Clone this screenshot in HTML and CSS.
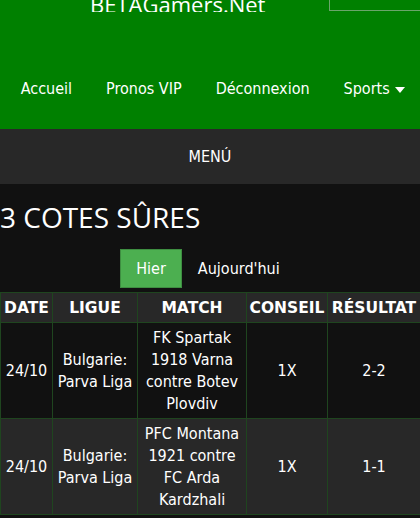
FILE: index.html
```html
<!DOCTYPE html>
<html lang="fr">
<head>
<meta charset="utf-8">
<title>BETAGamers.Net</title>
<link rel="stylesheet" href="styles.css">
</head>
<body>
<header class="site-header">
  <div class="brand-row">
    <div class="brand">BETAGamers.Net</div>
    <div class="search-box"></div>
  </div>
  <nav class="main-nav">
    <a class="nav-link" href="#">Accueil</a>
    <a class="nav-link" href="#">Pronos VIP</a>
    <a class="nav-link" href="#">Déconnexion</a>
    <a class="nav-link" href="#">Sports <span class="caret"></span></a>
  </nav>
</header>
<div class="menu-bar">MENÚ</div>
<main class="content">
  <h1 class="page-title">3 COTES SÛRES</h1>
  <div class="tabs">
    <button class="tab tab-active">Hier</button>
    <button class="tab">Aujourd'hui</button>
  </div>
  <table class="odds">
    <colgroup>
      <col class="c-date"><col class="c-league"><col class="c-match"><col class="c-tip"><col class="c-result">
    </colgroup>
    <thead>
      <tr><th>DATE</th><th>LIGUE</th><th>MATCH</th><th>CONSEIL</th><th>RÉSULTAT</th></tr>
    </thead>
    <tbody>
      <tr class="row-odd">
        <td>24/10</td>
        <td>Bulgarie: Parva Liga</td>
        <td>FK Spartak 1918 Varna contre Botev Plovdiv</td>
        <td>1X</td>
        <td>2-2</td>
      </tr>
      <tr class="row-even">
        <td>24/10</td>
        <td>Bulgarie: Parva Liga</td>
        <td>PFC Montana 1921 contre FC Arda Kardzhali</td>
        <td>1X</td>
        <td>1-1</td>
      </tr>
    </tbody>
  </table>
</main>
</body>
</html>
```
FILE: styles.css
```css
* { box-sizing: border-box; }
html, body { margin: 0; padding: 0; }
body {
  background: #111111;
  color: #ffffff;
  font-family: "DejaVu Sans Condensed", "DejaVu Sans", sans-serif;
  font-size: 16px;
  overflow: hidden;
}
.site-header {
  background: #008000;
  height: 129px;
  display: flex;
  flex-direction: column;
}
.brand-row {
  height: 12px;
  display: flex;
  align-items: flex-end;
  overflow: hidden;
}
.brand {
  font-family: "Open Sans", sans-serif;
  font-size: 22px;
  line-height: 1;
  margin-left: 90px;
  margin-bottom: -3px;
  white-space: nowrap;
}
.search-box {
  margin-left: auto;
  width: 91px;
  height: 40px;
  border: 1px solid #6aa56a;
  border-right: none;
  margin-bottom: 1px;
}
.main-nav {
  display: flex;
  justify-content: center;
  margin-top: 66px;
  padding-left: 6px;
}
.nav-link {
  color: #ffffff;
  text-decoration: none;
  padding: 0 17px;
  line-height: 22px;
  white-space: nowrap;
}
.caret {
  display: inline-block;
  width: 0; height: 0;
  border-left: 5px solid transparent;
  border-right: 5px solid transparent;
  border-top: 6px solid #ffffff;
  vertical-align: middle;
  margin-left: 1px;
}
.menu-bar {
  background: #282828;
  height: 55px;
  line-height: 55px;
  text-align: center;
}
.page-title {
  font-family: "Open Sans", sans-serif;
  font-weight: 400;
  font-size: 28px;
  line-height: 38px;
  margin: 14px 0 0 0;
}
.tabs {
  display: flex;
  justify-content: center;
  margin-top: 13px;
  padding-right: 4px;
}
.tab {
  font-family: inherit;
  font-size: 16px;
  color: #ffffff;
  background: transparent;
  border: 1px solid transparent;
  height: 39px;
  padding: 0 15px;
  cursor: pointer;
}
.tab-active {
  background: #4caf50;
  border-color: #3e8e41;
}
.odds {
  margin-top: 4px;
  width: 420px;
  border-collapse: collapse;
  table-layout: fixed;
}
.c-date { width: 52px; }
.c-league { width: 85px; }
.c-match { width: 109px; }
.c-tip { width: 81px; }
.c-result { width: 93px; }
.odds th, .odds td {
  border: 1px solid #1f451f;
  text-align: center;
  line-height: 22px;
}
.odds td { padding: 4px 2px 3px; }
.odds th {
  background: #282828;
  font-family: "DejaVu Sans", sans-serif;
  font-weight: 700;
  font-size: 15.5px;
  padding: 4px 0 3px;
  white-space: nowrap;
}
.row-odd { background: #111111; }
.row-even { background: #282828; }
```
